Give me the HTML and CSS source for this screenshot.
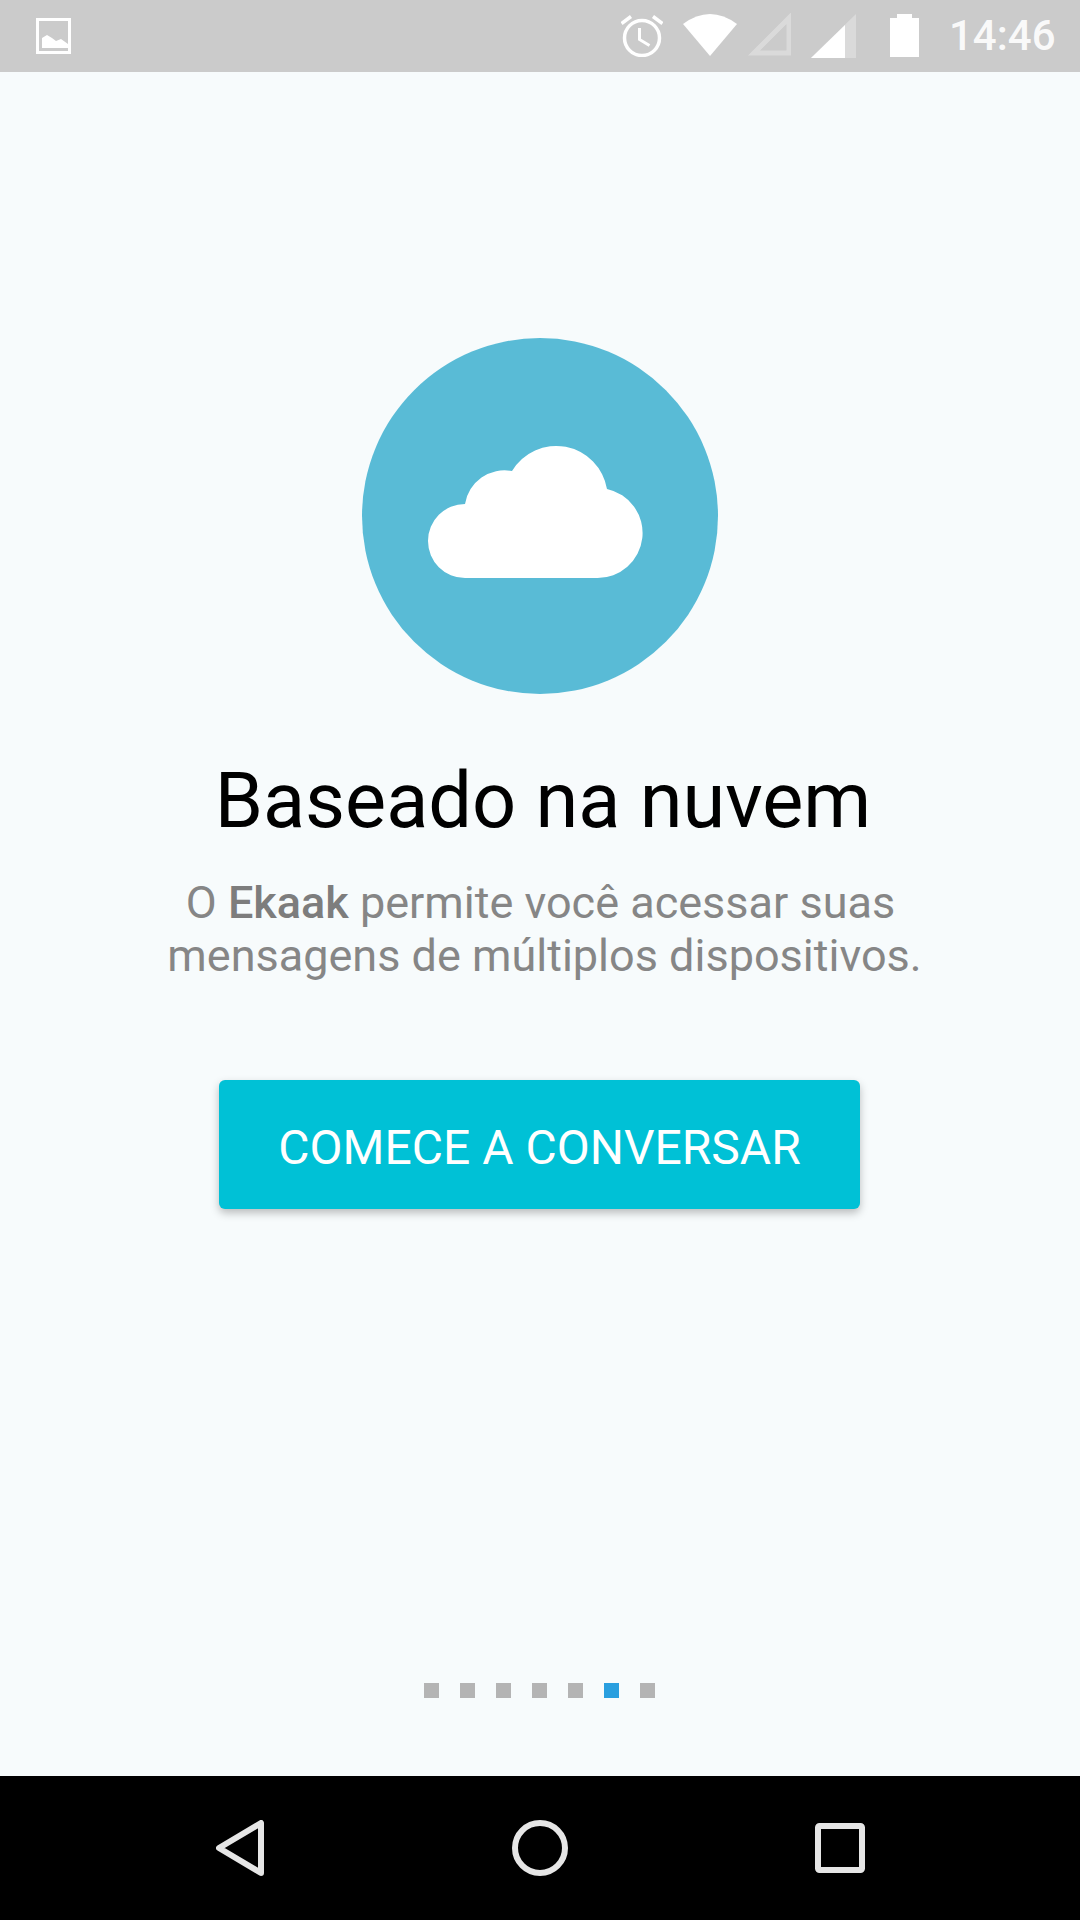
FILE: index.html
```html
<!DOCTYPE html>
<html>
  <head>
    <title>Ekaak</title>
    <link rel="stylesheet" href="styles.css">
  </head>
  <body>
    <div class="screen">
      <div class="statusbar">
        <svg class="ic-picture" width="36" height="36" viewBox="0 0 36 36">
          <rect x="1.5" y="1.5" width="32" height="33" fill="none" stroke="#fff" stroke-width="3"/>
          <path d="M6 30V20L11 17L16 20L20 23L25 21L32 26V30Z" fill="#fff"/>
        </svg>
        <svg class="ic-alarm" width="42" height="42" viewBox="0 0 42 42">
          <circle cx="21" cy="23" r="17.5" fill="none" stroke="#fff" stroke-width="3.5"/>
          <path d="M18.5 13V24.5L28.5 30.5" fill="none" stroke="#fff" stroke-width="3"/>
          <path d="M0.5 8.5L10 1.5M32 1.5L41.5 8.5" fill="none" stroke="#fff" stroke-width="3.5"/>
        </svg>
        <svg class="ic-wifi" width="54" height="42" viewBox="0 0 54 42">
          <path d="M27 42L0 10Q27 -10 54 10Z" fill="#fff"/>
        </svg>
        <svg class="ic-nosim" width="43" height="43" viewBox="0 0 43 43">
          <path d="M6 40L41 5V40Z" fill="none" stroke="#fff" stroke-opacity=".3" stroke-width="5"/>
        </svg>
        <svg class="ic-signal" width="45" height="44" viewBox="0 0 45 44">
          <path d="M0 44L45 0V44Z" fill="#fff" fill-opacity=".3"/>
          <path d="M0 44L34 11V44Z" fill="#fff"/>
        </svg>
        <svg class="ic-battery" width="29" height="43" viewBox="0 0 29 43">
          <path d="M7 0H22V4H29V43H0V4H7Z" fill="#fff"/>
        </svg>
        <span class="clock">14:46</span>
      </div>

      <div class="content">
        <div class="badge">
          <svg width="215" height="132" viewBox="0 0 215 132">
            <path d="M37 132A37 37 0 0 1 37 58A40 40 0 0 1 84 25A51.5 51.5 0 0 1 179 43A45 45 0 0 1 169 132Z" fill="#fff"/>
          </svg>
        </div>
        <h1 class="title">Baseado na nuvem</h1>
        <p class="intro"><span class="intro-first">O <b>Ekaak</b> permite você acessar suas</span><br>mensagens de múltiplos dispositivos.</p>
        <button type="button" class="start">COMECE A CONVERSAR</button>
        <div class="pager">
          <span class="dot"></span>
          <span class="dot"></span>
          <span class="dot"></span>
          <span class="dot"></span>
          <span class="dot"></span>
          <span class="dot on"></span>
          <span class="dot"></span>
        </div>
      </div>

      <div class="navbar">
        <svg width="48" height="56" viewBox="0 0 48 56">
          <path d="M45 3V53L3 28Z" fill="none" stroke="#e6e6e6" stroke-width="6" stroke-linejoin="round"/>
        </svg>
        <svg width="56" height="56" viewBox="0 0 56 56">
          <circle cx="28" cy="28" r="25" fill="none" stroke="#e6e6e6" stroke-width="6"/>
        </svg>
        <svg width="50" height="50" viewBox="0 0 50 50">
          <rect x="3" y="3" width="44" height="44" rx="1.5" fill="none" stroke="#e6e6e6" stroke-width="6"/>
        </svg>
      </div>
    </div>
  </body>
</html>
```

FILE: styles.css
```css
html, body { margin: 0; padding: 0; }
body { font-family: Roboto, "Liberation Sans", sans-serif; background: #f7fbfc; }

.screen { width: 1080px; height: 1920px; display: flex; flex-direction: column; overflow: hidden; }

.statusbar { height: 72px; flex-shrink: 0; background: #cbcbcb; display: flex; align-items: flex-start; }
.ic-picture { margin: 18px 0 0 36px; }
.ic-alarm { margin: 15px 0 0 549px; }
.ic-wifi { margin: 14px 0 0 20px; }
.ic-nosim { margin: 13px 0 0 11px; }
.ic-signal { margin: 14px 0 0 20px; }
.ic-battery { margin: 14px 0 0 34px; }
.clock { margin-left: 30px; color: #fff; font-size: 42px; font-weight: 500; line-height: 72px; opacity: .9; }

.content { flex: 1; display: flex; flex-direction: column; align-items: center; }

.badge { width: 356px; height: 356px; margin-top: 266px; border-radius: 50%; background: #59bbd6; display: flex; align-items: center; justify-content: center; }
.badge svg { margin: -8px 0 0 -9px; overflow: visible; }

.title { margin: 62px 0 0 6px; font-size: 77.5px; font-weight: 400; line-height: 90px; color: #000; white-space: nowrap; }
.intro { margin: 30px 0 0 9px; font-size: 45px; line-height: 53px; color: #868686; text-align: center; white-space: nowrap; }
.intro-first { padding-right: 8px; }
.intro b { font-weight: 500; color: #7d7d7d; }

.start { width: 641px; height: 129px; margin: 98px 1px 0 0; padding: 6px 0 0; border: none; border-radius: 6px; background: #00c1d6; color: #fff; font-family: inherit; font-size: 48px; font-weight: 400; box-shadow: 0 4px 8px rgba(0,0,0,0.25); }

.pager { margin: auto 1px 78px 0; display: flex; gap: 21px; }
.dot { width: 15px; height: 15px; background: #b4b4b4; }
.dot.on { background: #2a9fdf; }

.navbar { height: 144px; flex-shrink: 0; background: #000; display: grid; grid-template-columns: repeat(3, 300px); justify-content: center; justify-items: center; align-items: center; }
```
